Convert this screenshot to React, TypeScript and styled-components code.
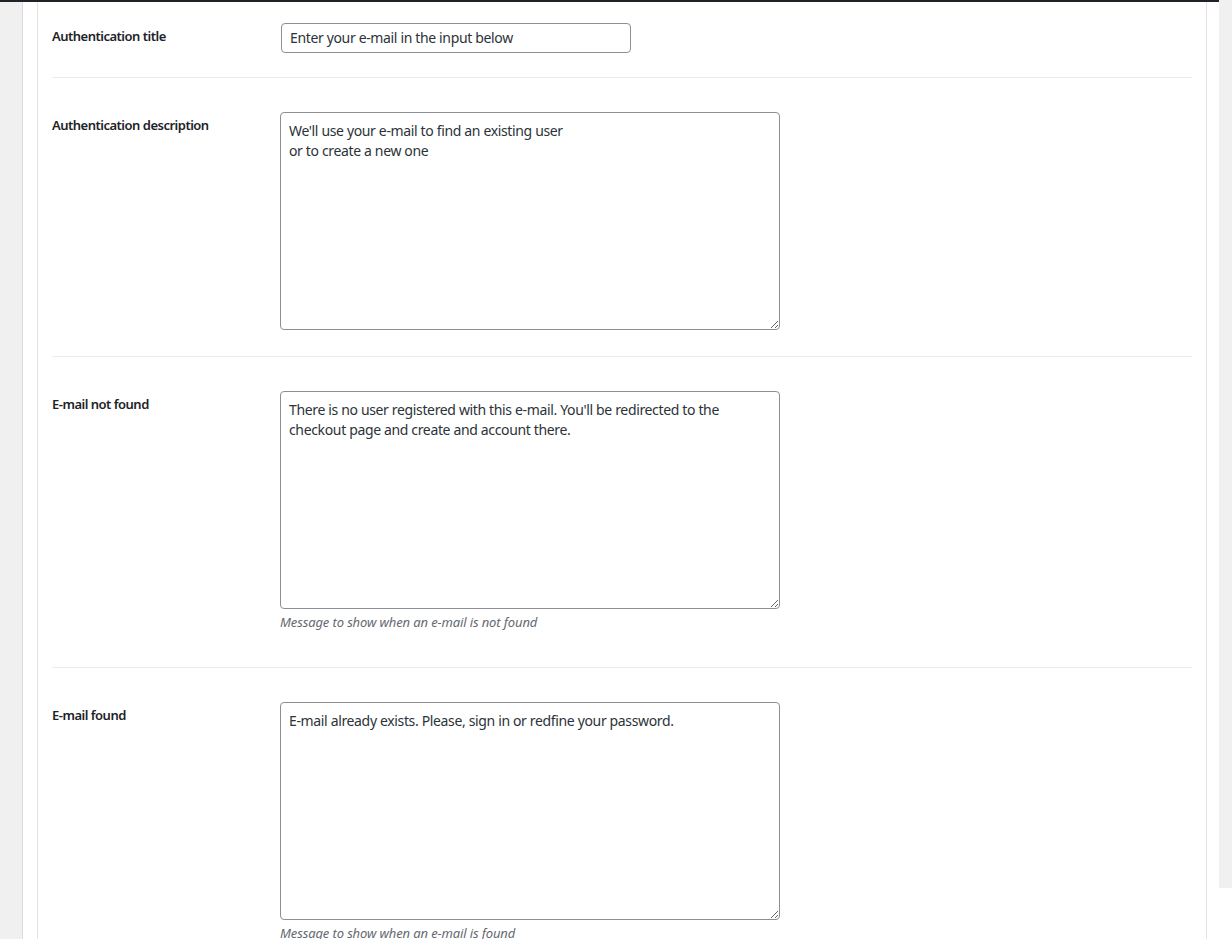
import React from 'react'
import styled, { createGlobalStyle } from 'styled-components'

const GlobalStyle = createGlobalStyle`
    body {
        margin: 0;
        background: #fff;
        font-family: "Noto Sans", "Open Sans", sans-serif;
        color: #3c434a;
    }
`

const Page = styled.div`
    display: flex;
    width: 1232px;
    height: 939px;
    overflow: hidden;
`

const Main = styled.div`
    width: 1219px;
    display: flex;
    flex-direction: column;
`

const TopBar = styled.div`
    height: 2px;
    background: #1d2327;
    flex: 0 0 2px;
`

const Body = styled.div`
    flex: 1;
    display: flex;
`

const Sidebar = styled.div`
    flex: 0 0 22px;
    background: #f0f0f1;
    border-right: 1px solid #dcdcde;
`

const Panel = styled.div`
    margin-left: 14px;
    width: 1140px;
    padding: 0 14px;
    border-left: 1px solid #e2e2e4;
    border-right: 1px solid #e2e2e4;
`

const ScrollTrack = styled.div`
    flex: 0 0 13px;
    height: 888px;
    background: #f0f0f0;
`

const Row = styled.div<{ $first?: boolean; $last?: boolean }>`
    display: grid;
    grid-template-columns: 228px 1fr;
    padding: ${p => (p.$first ? '21px 0 24px' : '34px 0 26px')};
    border-bottom: ${p => (p.$last ? 'none' : '1px solid #ebebeb')};
`

const Label = styled.div`
    padding-top: 4px;
    font-size: 13px;
    line-height: 18px;
    font-weight: 600;
    letter-spacing: -0.5px;
    color: #1d2327;
`

const Field = styled.div`
    display: flex;
    flex-direction: column;
`

const TextInput = styled.input`
    box-sizing: border-box;
    width: 350px;
    height: 30px;
    margin: 0 0 0 1px;
    padding: 0 8px 1px;
    border: 1px solid #8c8f94;
    border-radius: 4px;
    font: inherit;
    font-size: 14px;
    letter-spacing: -0.35px;
    color: #2c3338;
    background: #fff;
    outline: none;
`

const TextArea = styled.textarea`
    box-sizing: border-box;
    display: block;
    width: 500px;
    height: 218px;
    margin: 0;
    padding: 8px 8px 8px;
    border: 1px solid #8c8f94;
    border-radius: 4px;
    font: inherit;
    font-size: 14px;
    line-height: 20px;
    letter-spacing: -0.35px;
    color: #2c3338;
    background: #fff;
    outline: none;
`

const Description = styled.p`
    margin: 4px 0 9px;
    font-size: 13px;
    line-height: 19px;
    font-style: italic;
    letter-spacing: -0.12px;
    color: #646970;
`

const rows = [
    {
        label: 'Authentication description',
        value: "We'll use your e-mail to find an existing user\nor to create a new one",
    },
    {
        label: 'E-mail not found',
        value: "There is no user registered with this e-mail. You'll be redirected to the checkout page and create and account there.",
        description: 'Message to show when an e-mail is not found',
    },
    {
        label: 'E-mail found',
        value: 'E-mail already exists. Please, sign in or redfine your password.',
        description: 'Message to show when an e-mail is found',
    },
]

const App = () => {
    return (
        <>
            <GlobalStyle />
            <Page>
                <Main>
                    <TopBar />
                    <Body>
                        <Sidebar />
                        <Panel>
                            <Row $first>
                                <Label>Authentication title</Label>
                                <Field>
                                    <TextInput defaultValue="Enter your e-mail in the input below" />
                                </Field>
                            </Row>
                            {rows.map((row, i) => (
                                <Row key={row.label} $last={i === rows.length - 1}>
                                    <Label>{row.label}</Label>
                                    <Field>
                                        <TextArea defaultValue={row.value} />
                                        {row.description && <Description>{row.description}</Description>}
                                    </Field>
                                </Row>
                            ))}
                        </Panel>
                    </Body>
                </Main>
                <ScrollTrack />
            </Page>
        </>
    )
}

export default App
